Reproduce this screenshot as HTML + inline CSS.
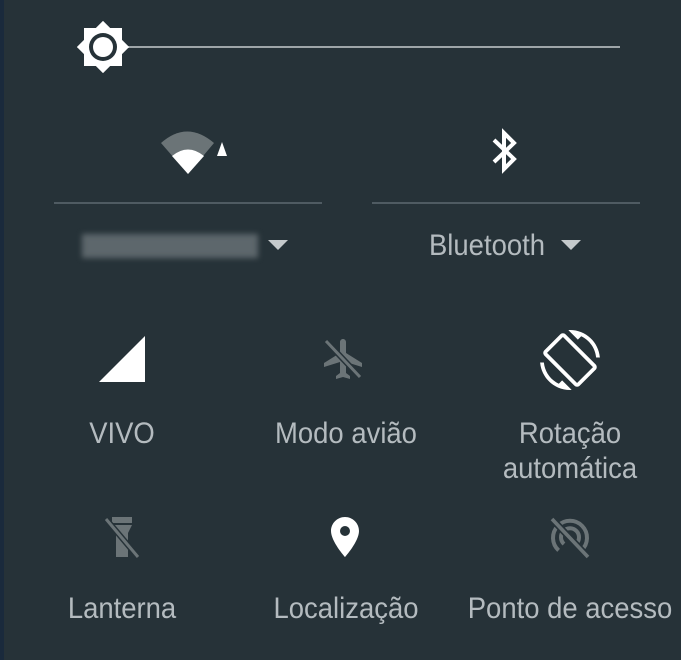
<!DOCTYPE html><html><head><style>
body{margin:0;width:681px;height:660px;background:#263238;position:relative;overflow:hidden;font-family:"Liberation Sans",sans-serif;color:#b4bbbf}
.t{position:absolute;font-size:30px;text-align:center;width:240px;line-height:35px;transform:scaleX(.915)}
svg{position:absolute}
</style></head><body>
<div style="position:absolute;left:0;top:0;width:4px;height:660px;background:#1a2a3c"></div>
<div style="position:absolute;left:120px;top:46px;width:500px;height:2px;background:#9ea5a8"></div>
<svg style="left:77px;top:21px" width="52" height="52" viewBox="0 0 52 52"><rect x="7" y="7" width="38" height="38" fill="#fff"/><rect x="7.5" y="7.5" width="37" height="37" fill="#fff" transform="rotate(45 26 26)"/><circle cx="26" cy="26" r="14" fill="#263238"/><circle cx="26" cy="26" r="10" fill="#fff"/></svg>
<svg style="left:160px;top:128px" width="70" height="48" viewBox="0 0 70 48"><path d="M1,15 Q27,-8 54,15 L28,46 Z" fill="#6b7477"/><path d="M12,28 Q28,15 44,28 L28,46 Z" fill="#fff"/><polygon points="62,14 67,28 57,28" fill="#fff"/></svg>
<svg style="left:488px;top:128px" width="32" height="46" viewBox="0 0 32 46"><path d="M6,12 L26,31 L16,41 L16,5 L26,15 L6,34" fill="none" stroke="#fff" stroke-width="4"/></svg>
<div style="position:absolute;left:54px;top:202px;width:268px;height:2px;background:#4f5b62"></div>
<div style="position:absolute;left:372px;top:202px;width:268px;height:2px;background:#4f5b62"></div>
<div style="position:absolute;left:82px;top:234px;width:176px;height:24px;background:#5d676c;filter:blur(3px)"></div>
<svg style="left:268px;top:240px" width="20" height="10"><polygon points="0,0 20,0 10,10" fill="#c5cacc"/></svg>
<div class="t" style="left:367px;top:228px">Bluetooth</div>
<svg style="left:561px;top:240px" width="20" height="10"><polygon points="0,0 20,0 10,10" fill="#c5cacc"/></svg>
<svg style="left:98px;top:335px" width="48" height="48"><polygon points="47,1 47,47 1,47" fill="#fff"/></svg>
<svg style="left:320px;top:335px" width="48" height="48" viewBox="0 0 24 24"><path d="M21 16v-2l-8-5V3.5c0-.83-.67-1.5-1.5-1.5S10 2.67 10 3.5V9l-8 5v2l8-2.5V19l-2 1.5V22l3.5-1 3.5 1v-1.5L13 19v-5.5l8 2.5z" fill="#6b7477"/><line x1="3" y1="3" x2="20" y2="21" stroke="#263238" stroke-width="3"/><line x1="3" y1="3" x2="20" y2="21" stroke="#6b7477" stroke-width="1.5"/></svg>
<svg style="left:540px;top:330px" width="60" height="60" viewBox="0 0 24 24"><path d="M16.48 2.52c3.27 1.55 5.61 4.72 5.970 8.48h1.5C23.44 4.84 18.29 0 12 0l-.66.03 3.81 3.81 1.33-1.32zm-6.25-.77c-.59-.59-1.540-.59-2.12 0L1.75 8.11c-.59.59-.59 1.54 0 2.12l12.02 12.02c.59.59 1.54.59 2.12 0l6.36-6.36c.59-.59.59-1.54 0-2.12L10.23 1.75zm4.6 19.44L2.81 9.17l6.36-6.36 12.02 12.02-6.36 6.36zm-7.31.29C4.25 19.94 1.91 16.76 1.55 13H.05C.56 19.160 5.71 24 12 24l.66-.03-3.81-3.81-1.33 1.32z" fill="#fff"/></svg>
<div class="t" style="left:2px;top:416px">VIVO</div>
<div class="t" style="left:226px;top:416px">Modo avião</div>
<div class="t" style="left:450px;top:416px">Rotação<br>automática</div>
<svg style="left:98px;top:513px" width="48" height="48" viewBox="0 0 24 24"><path d="M7 2h10v3H7zM7 6h10l-2 4v12H9V10z" fill="#6b7477"/><line x1="4" y1="3" x2="20" y2="22" stroke="#263238" stroke-width="3"/><line x1="4" y1="3" x2="20" y2="22" stroke="#6b7477" stroke-width="1.5"/></svg>
<svg style="left:321px;top:513px" width="48" height="48" viewBox="0 0 24 24"><path d="M12 2C8.13 2 5 5.13 5 9c0 5.25 7 13 7 13s7-7.75 7-13c0-3.87-3.13-7-7-7zm0 9.5a2.5 2.5 0 0 1 0-5 2.5 2.5 0 0 1 0 5z" fill="#fff"/></svg>
<svg style="left:546px;top:513px" width="48" height="48" viewBox="0 0 24 24"><g fill="none" stroke="#6b7477" stroke-width="2"><path d="M6.3 18.7A8.5 8.5 0 1 1 17.7 18.7"/><path d="M9 15.5A4.5 4.5 0 1 1 15 15.5"/></g><line x1="3" y1="3" x2="21" y2="22" stroke="#263238" stroke-width="3.5"/><line x1="3" y1="3" x2="21" y2="22" stroke="#6b7477" stroke-width="1.8"/></svg>
<div class="t" style="left:2px;top:591px">Lanterna</div>
<div class="t" style="left:226px;top:591px">Localização</div>
<div class="t" style="left:450px;top:591px">Ponto de acesso</div>
</body></html>
